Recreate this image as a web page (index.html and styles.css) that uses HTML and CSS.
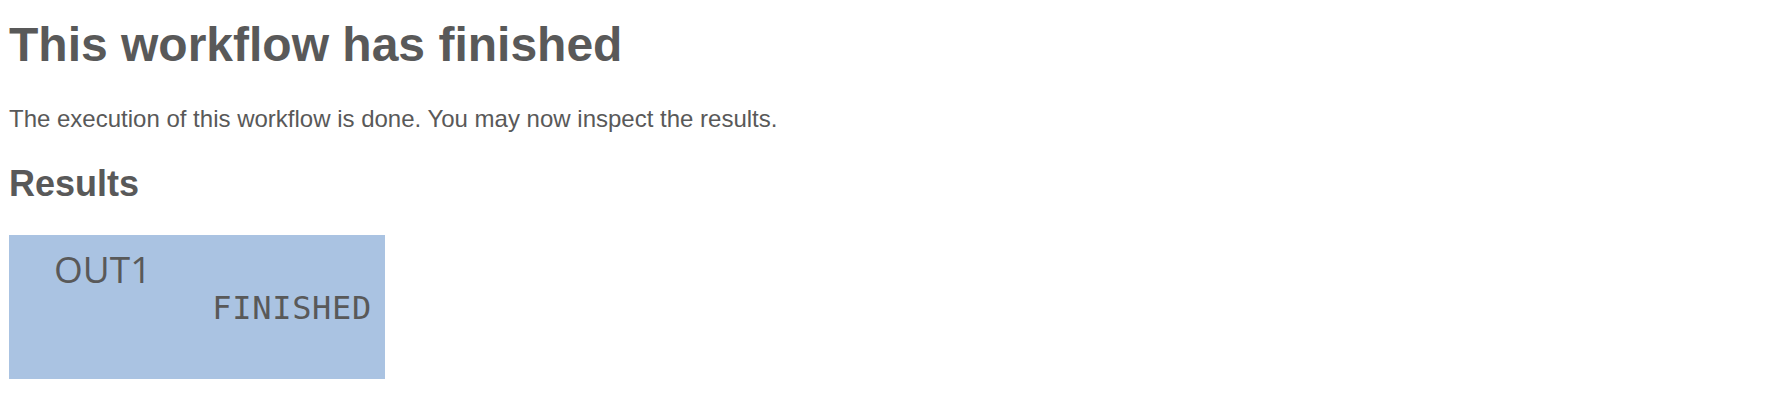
FILE: index.html
```html
<!DOCTYPE html>
<html lang="en">
<head>
<meta charset="utf-8">
<title>Workflow finished</title>
<link rel="stylesheet" href="styles.css">
</head>
<body>
<main class="page">
  <h1 class="title">This workflow has finished</h1>
  <p class="lead">The execution of this workflow is done. You may now inspect the results.</p>
  <h2 class="section-title">Results</h2>
  <div class="results">
    <div class="result-card">
      <div class="result-name">OUT1</div>
      <div class="result-status">FINISHED</div>
    </div>
  </div>
</main>
</body>
</html>
```

FILE: styles.css
```css
html, body {
  margin: 0;
  padding: 0;
  background: #ffffff;
}

.page {
  padding: 17px 9px 0 9px;
  color: #595959;
  font-family: "Liberation Sans", Arial, sans-serif;
}

.title {
  margin: 0;
  font-size: 48px;
  line-height: 56px;
  font-weight: bold;
}

.lead {
  margin: 32px 0 0 0;
  font-size: 24px;
  line-height: 28px;
}

.section-title {
  margin: 30px 0 0 0;
  font-size: 36px;
  line-height: 42px;
  font-weight: bold;
}

.results {
  margin-top: 30px;
  display: flex;
}

.result-card {
  width: 376px;
  height: 144px;
  box-sizing: border-box;
  background: #aac3e2;
  padding: 16px 14px 0 45px;
  display: flex;
  flex-direction: column;
}

.result-name {
  font-family: "Open Sans", "Noto Sans", sans-serif;
  font-size: 37px;
  line-height: 36px;
  align-self: flex-start;
}

.result-status {
  margin-top: 3px;
  margin-right: -1px;
  font-family: "DejaVu Sans Mono", monospace;
  font-size: 32px;
  line-height: 36px;
  letter-spacing: 0.7px;
  align-self: flex-end;
}
```
